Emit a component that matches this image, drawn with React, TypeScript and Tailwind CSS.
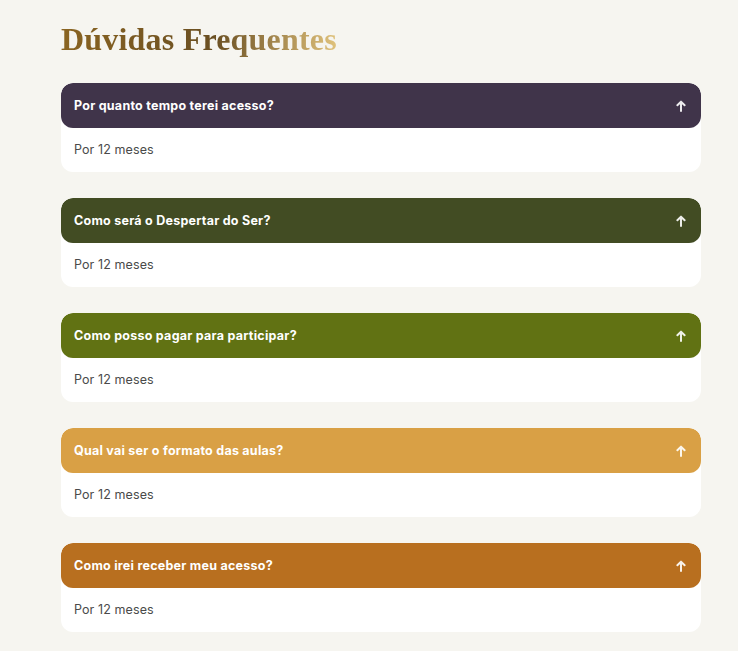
const FAQ = [
  { q: "Por quanto tempo terei acesso?", a: "Por 12 meses", color: "bg-[#40344a]" },
  { q: "Como será o Despertar do Ser?", a: "Por 12 meses", color: "bg-[#424c23]" },
  { q: "Como posso pagar para participar?", a: "Por 12 meses", color: "bg-[#617213]" },
  { q: "Qual vai ser o formato das aulas?", a: "Por 12 meses", color: "bg-[#d9a045]" },
  { q: "Como irei receber meu acesso?", a: "Por 12 meses", color: "bg-[#b86f1f]" },
];

function Arrow() {
  return (
    <svg width="10" height="12" viewBox="0 0 10 12" fill="none" className="text-white/90">
      <path
        d="M5 11V1.8M1.4 5.2L5 1.6L8.6 5.2"
        stroke="currentColor"
        strokeWidth="2"
        strokeLinecap="round"
        strokeLinejoin="round"
      />
    </svg>
  );
}

export default function App() {
  return (
    <div className="min-h-screen bg-[#f6f5f0] px-[61px] pt-[21px] pb-[18px]">
      {/* Title */}
      <h2 className="inline-block bg-gradient-to-r from-[#8a6421] via-[#6a4f22] via-55% to-[#e0c27c] bg-clip-text text-[32px] leading-[37px] font-bold tracking-[0.2px] text-transparent [font-family:'Liberation_Serif',serif]">
        Dúvidas Frequentes
      </h2>

      {/* Accordion */}
      <div className="mt-[25px] flex w-[640px] flex-col gap-[26px] [font-family:'Inter',sans-serif]">
        {FAQ.map((item) => (
          <div key={item.q} className="overflow-hidden rounded-[12px] bg-white">
            <button
              className={`flex h-[45px] w-full items-center justify-between rounded-[12px] pl-[13px] pr-[15px] text-left ${item.color}`}
            >
              <span className="pt-[1px] text-[12.5px] font-bold tracking-[0.25px] text-white">
                {item.q}
              </span>
              <Arrow />
            </button>
            <div className="flex h-[44px] items-center px-[13px] pt-[1px] text-[12.5px] tracking-[0.1px] text-[#4a4a4a]">
              {item.a}
            </div>
          </div>
        ))}
      </div>
    </div>
  );
}
